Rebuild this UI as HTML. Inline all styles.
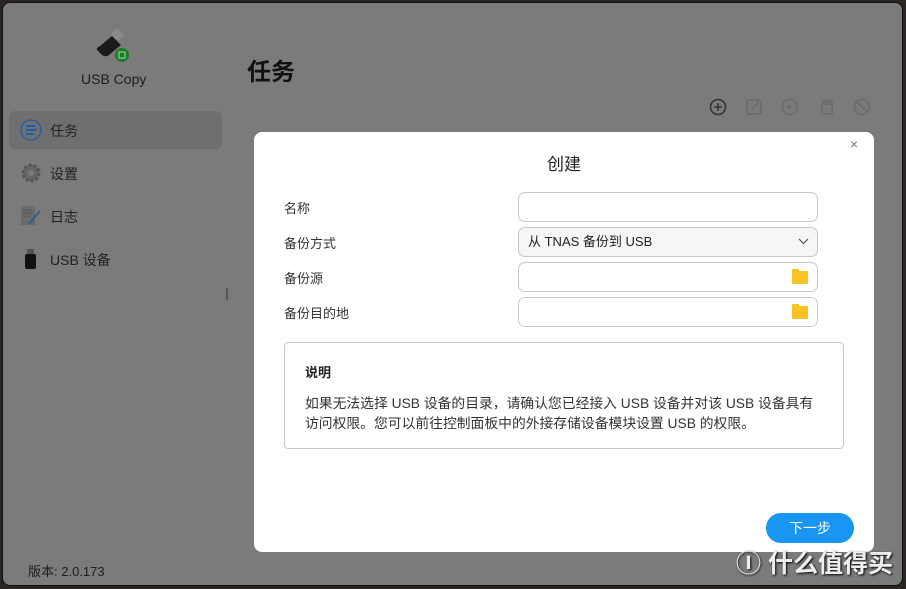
<!DOCTYPE html>
<html><head><meta charset="utf-8"><style>
*{margin:0;padding:0;box-sizing:border-box}
body{width:906px;height:589px;background:#2a2522;font-family:"Liberation Sans","Noto Sans CJK SC",sans-serif;position:relative;overflow:hidden}
.win{position:absolute;left:2px;top:2px;width:901px;height:584px;background:#7b7b7b;border-radius:8px;border:1px solid #111}
.abs{position:absolute}
.t{color:#222;font-size:14px}
.inp{position:absolute;left:518px;width:300px;height:30px;border:1px solid #c8c8c8;border-radius:7px;background:#fff}
.lbl{position:absolute;left:284px;font-size:13px;color:#333}
.fold{position:absolute;right:9px;top:8px;width:16px;height:13px;background:#f7c325;border-radius:1px}
.fold:before{content:"";position:absolute;left:0;top:-2px;width:7px;height:3px;background:#f7c325;border-radius:1px 1px 0 0}
</style></head><body>
<div class="win"></div>
<svg class="abs" style="left:94px;top:28px" width="40" height="36" viewBox="0 0 40 36">
<rect x="18" y="2" width="10" height="9" fill="#8a8a8a" transform="rotate(40 23 7)"/>
<path d="M6 18 L18 8 L27 17 L15 27 Q11 30 7 26 L3 22 Q2 20 6 18Z" fill="#1a1a1a"/>
<circle cx="28" cy="27" r="7" fill="#1e7d2c"/><rect x="25" y="24" width="6" height="6" fill="none" stroke="#9adf9a" stroke-width="1"/>
</svg>
<div class="abs t" style="left:81px;top:71px;font-size:14px;color:#1e1e1e">USB Copy</div>
<div class="abs" style="left:9px;top:111px;width:213px;height:38px;background:#6f6f6f;border-radius:6px"></div>
<svg class="abs" style="left:20px;top:119px" width="22" height="22"><circle cx="11" cy="11" r="10" fill="none" stroke="#1a5fa8" stroke-width="1.3"/><rect x="6" y="6" width="9" height="2" fill="#1a5fa8"/><rect x="6" y="10" width="10" height="2" fill="#1a5fa8"/><rect x="6" y="14" width="7" height="2" fill="#1a5fa8"/></svg>
<div class="abs t" style="left:50px;top:121px">任务</div>
<svg class="abs" style="left:21px;top:163px" width="20" height="20"><circle cx="10" cy="10" r="8" fill="#666" stroke="#555" stroke-width="3" stroke-dasharray="3 2"/><circle cx="10" cy="10" r="3" fill="#7b7b7b"/></svg>
<div class="abs t" style="left:50px;top:164px">设置</div>
<svg class="abs" style="left:20px;top:206px" width="22" height="20"><rect x="1" y="0" width="14" height="19" fill="#6a6a6a"/><line x1="3" y1="4" x2="12" y2="4" stroke="#555"/><line x1="3" y1="7" x2="12" y2="7" stroke="#555"/><line x1="3" y1="10" x2="10" y2="10" stroke="#555"/><line x1="9" y1="18" x2="20" y2="5" stroke="#2b5f8d" stroke-width="2"/></svg>
<div class="abs t" style="left:50px;top:207px">日志</div>
<svg class="abs" style="left:25px;top:249px" width="12" height="20"><rect x="2" y="0" width="7" height="5" fill="#555"/><rect x="0" y="5" width="11" height="15" rx="2" fill="#111"/></svg>
<div class="abs t" style="left:50px;top:250px">USB 设备</div>
<div class="abs" style="left:226px;top:288px;width:2px;height:12px;border-left:1px solid #555;border-right:1px solid #555"></div>
<div class="abs" style="left:28px;top:561px;font-size:13px;color:#1e1e1e">版本: 2.0.173</div>
<div class="abs" style="left:247px;top:52px;font-size:24px;font-weight:bold;color:#111">任务</div>
<svg class="abs" style="left:708px;top:96px" width="166" height="22" fill="none" stroke-width="1.5">
<circle cx="10" cy="11" r="7.5" stroke="#333"/><path d="M10 7v8M6 11h8" stroke="#333"/>
<rect x="39" y="4" width="14" height="14" rx="2" stroke="#6a6a6a"/><path d="M44 13l7-8" stroke="#6a6a6a"/>
<circle cx="82" cy="11" r="7.5" stroke="#6a6a6a"/><path d="M80 8l4 3-4 3z" fill="#6a6a6a" stroke="none"/>
<path d="M113 6h12M116 6v-2h6v2M114 8h10v10h-10z" stroke="#6a6a6a"/>
<circle cx="154" cy="11" r="7.5" stroke="#6a6a6a"/><path d="M149 6l10 10" stroke="#6a6a6a"/>
</svg>
<div class="abs" style="left:254px;top:132px;width:620px;height:420px;background:#fff;border-radius:8px"></div>
<div class="abs" style="left:850px;top:136px;font-size:14px;color:#777">×</div>
<div class="abs" style="left:0;width:1128px;top:150px;text-align:center;font-size:17px;color:#222">创建</div>
<div class="lbl" style="top:198px">名称</div>
<div class="lbl" style="top:233px">备份方式</div>
<div class="lbl" style="top:268px">备份源</div>
<div class="lbl" style="top:303px">备份目的地</div>
<div class="inp" style="top:192px"></div>
<div class="inp" style="top:227px;background:#f6f6f6"><span style="position:absolute;left:9px;top:6px;font-size:13px;line-height:16px;color:#222">从 TNAS 备份到 USB</span><svg style="position:absolute;right:8px;top:10px" width="11" height="7"><path d="M1 1l4.5 4.5L10 1" fill="none" stroke="#555" stroke-width="1.2"/></svg></div>
<div class="inp" style="top:262px"><div class="fold"></div></div>
<div class="inp" style="top:297px"><div class="fold"></div></div>
<div class="abs" style="left:284px;top:342px;width:560px;height:107px;border:1px solid #c8c8c8;border-radius:4px"></div>
<div class="abs" style="left:305px;top:362px;font-size:13px;font-weight:bold;color:#222">说明</div>
<div class="abs" style="left:305px;top:394px;font-size:13.8px;color:#333;line-height:20px;white-space:nowrap">如果无法选择 USB 设备的目录，请确认您已经接入 USB 设备并对该 USB 设备具有<br>访问权限。您可以前往控制面板中的外接存储设备模块设置 USB 的权限。</div>
<div class="abs" style="left:766px;top:513px;width:88px;height:30px;background:#1a95f2;border-radius:15px;color:#fff;font-size:14px;text-align:center;line-height:30px">下一步</div>
<div class="abs" style="left:736px;top:544px;font-size:25px;color:#eee;font-weight:bold;text-shadow:1px 1px 2px #000">Ⓘ 什么值得买</div>
</body></html>
